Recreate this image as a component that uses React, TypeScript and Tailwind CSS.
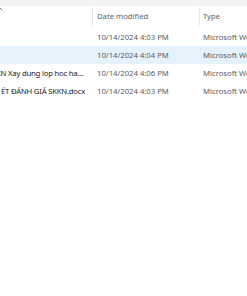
const rows = [
  { name: "", prefix: 0, date: "10/14/2024 4:03 PM", selected: false },
  { name: "", prefix: 0, date: "10/14/2024 4:04 PM", selected: true },
  { name: "KN Xay dung lop hoc hanh phuc.docx", prefix: -4, date: "10/14/2024 4:06 PM", selected: false },
  { name: "ẾT ĐÁNH GIÁ SKKN.docx", prefix: 1, date: "10/14/2024 4:03 PM", selected: false },
];

export default function App() {
  return (
    <div
      className="w-[247px] h-[296px] bg-white overflow-hidden text-[7.7px] leading-[12px]"
      style={{ fontFamily: '"Noto Sans", "Open Sans", sans-serif' }}
    >
      {/* top strip */}
      <div className="h-[6px] bg-[#f3f3f3]" />

      {/* column headers */}
      <div className="relative flex h-[20px] items-center text-[#5f5f5f]">
        <svg className="absolute left-[-3px] top-[1px]" width="6" height="4" viewBox="0 0 6 4">
          <path d="M0.5 3.5 L3 1 L5.5 3.5" fill="none" stroke="#777" strokeWidth="1" />
        </svg>
        <div className="w-[92px] shrink-0" />
        <div className="flex h-[19px] w-[107px] shrink-0 items-center border-l border-[#e8e8e8] pl-[4px]">
          Date modified
        </div>
        <div className="flex h-[19px] flex-1 items-center border-l border-[#e8e8e8] pl-[3px]">
          Type
        </div>
      </div>

      <div className="h-[2px]" />

      {/* file rows */}
      {rows.map((r, i) => (
        <div
          key={i}
          className={`flex h-[18px] items-center whitespace-nowrap ${r.selected ? "bg-[#e5f1fb]" : ""}`}
        >
          <div className="w-[92px] shrink-0 overflow-hidden">
            <div
              className="w-[89px] truncate tracking-[-0.2px] text-[#1b1b1b]"
              style={{ marginLeft: r.prefix }}
            >
              {r.name}
            </div>
          </div>
          <div className="w-[107px] shrink-0 overflow-hidden pl-[5px] text-[#5c5c5c]">{r.date}</div>
          <div className="min-w-0 flex-1 overflow-hidden pl-[4px] text-[#5c5c5c]">Microsoft Word</div>
        </div>
      ))}
    </div>
  );
}
